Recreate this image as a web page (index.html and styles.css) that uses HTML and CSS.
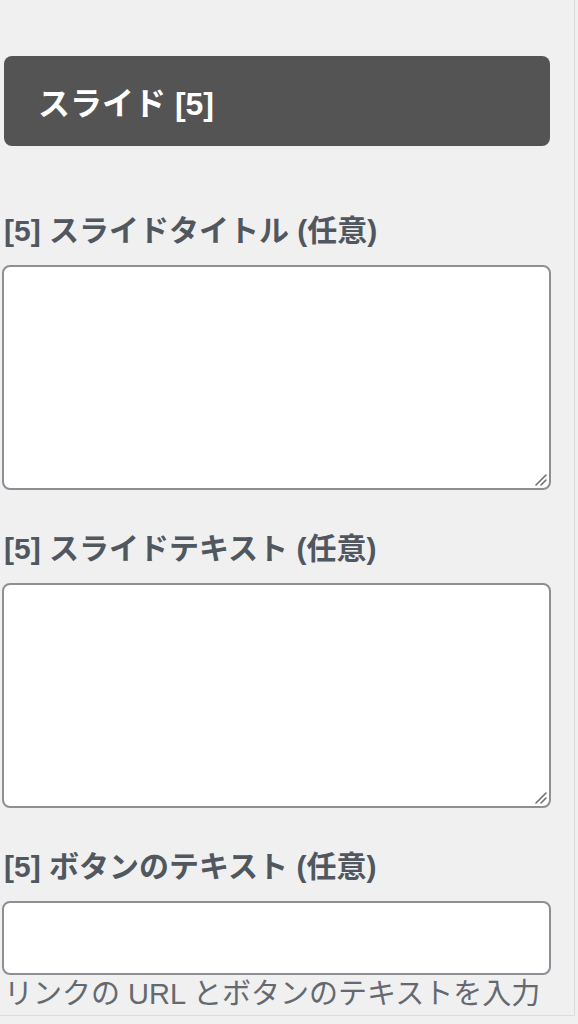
FILE: index.html
```html
<!DOCTYPE html>
<html lang="ja">
<head>
    <meta charset="UTF-8">
    <meta name="viewport" content="width=device-width, initial-scale=1.0">
    <title>スライド [5]</title>
    <link rel="stylesheet" href="styles.css">
</head>
<body>
    <div class="panel">
        <div class="section-title">
            <h3>スライド [5]</h3>
        </div>

        <div class="control">
            <label class="control-title" for="slideTitle5">[5] スライドタイトル (任意)</label>
            <div class="area-wrap">
                <textarea id="slideTitle5" class="field-area"></textarea>
                <svg class="grip" width="14" height="14" viewBox="0 0 14 14">
                    <path d="M2 12 L12 2 M7 12 L12 7" stroke="#707070" stroke-width="1.6" stroke-linecap="round" fill="none"/>
                </svg>
            </div>
        </div>

        <div class="control">
            <label class="control-title" for="slideText5">[5] スライドテキスト (任意)</label>
            <div class="area-wrap">
                <textarea id="slideText5" class="field-area"></textarea>
                <svg class="grip" width="14" height="14" viewBox="0 0 14 14">
                    <path d="M2 12 L12 2 M7 12 L12 7" stroke="#707070" stroke-width="1.6" stroke-linecap="round" fill="none"/>
                </svg>
            </div>
        </div>

        <div class="control">
            <label class="control-title" for="buttonText5">[5] ボタンのテキスト (任意)</label>
            <input type="text" id="buttonText5" class="field-input">
            <span class="description">リンクの URL とボタンのテキストを入力</span>
        </div>
    </div>
</body>
</html>
```

FILE: styles.css
```css
body {
    background-color: #f0f0f1;
    color: #50575e;
    font-family: "Liberation Sans", "Noto Sans CJK JP", sans-serif;
    margin: 0;
    padding: 0;
}

.panel {
    width: 575px;
    height: 1016px;
    box-sizing: border-box;
    padding-top: 56px;
    border-right: 1px solid #dcdcde;
    border-bottom: 1px solid #dcdcde;
}

.section-title {
    margin-left: 4px;
    width: 546px;
    height: 90px;
    box-sizing: border-box;
    padding-left: 34px;
    background-color: #545454;
    border-radius: 8px;
    display: flex;
    align-items: center;
}

.section-title h3 {
    margin: 0;
    color: #fff;
    font-size: 32px;
    font-weight: bold;
}

.control {
    display: flex;
    flex-direction: column;
    margin-left: 2px;
    width: 549px;
    margin-top: 39px;
}

.section-title + .control {
    margin-top: 65px;
}

.control-title {
    margin-left: 2px;
    height: 40px;
    line-height: 40px;
    margin-bottom: 14px;
    font-size: 30px;
    font-weight: bold;
    color: #50575e;
}

.area-wrap {
    position: relative;
}

.grip {
    position: absolute;
    right: 3px;
    bottom: 3px;
}

.field-area,
.field-input {
    display: block;
    box-sizing: border-box;
    width: 549px;
    margin: 0;
    background-color: #fff;
    border: 2px solid #8c8f94;
    border-radius: 8px;
    font: inherit;
}

.field-area {
    height: 225px;
    resize: none;
}

.field-input {
    height: 74px;
}

.description {
    margin-left: 2px;
    height: 38px;
    line-height: 38px;
    font-size: 29px;
    white-space: nowrap;
    color: #646970;
}
```
